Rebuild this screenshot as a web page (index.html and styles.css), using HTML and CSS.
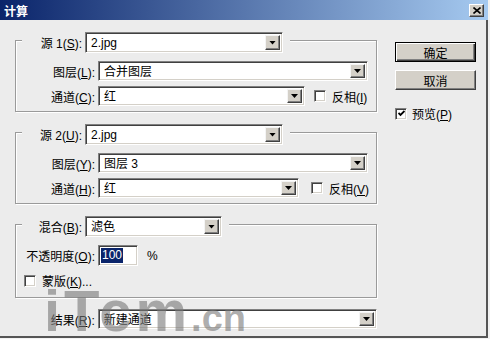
FILE: index.html
```html
<!DOCTYPE html>
<html>
  <head>
    <meta charset="utf-8">
    <title>计算</title>
    <link rel="stylesheet" href="styles.css">
  </head>
  <body>
    <div class="window">
      <div class="titlebar">
        <span class="title">计算</span>
        <span class="close-btn">
          <svg width="8" height="7" viewBox="0 0 8 7"><path d="M0.5 0.5L7.5 6.5M7.5 0.5L0.5 6.5" stroke="#000" stroke-width="1.6" fill="none"/></svg>
        </span>
      </div>

      <div class="main">
        <div class="left">
          <!-- source 1 -->
          <div class="group">
            <div class="group-head">
              <span class="head-label">源 1(<u>S</u>):</span>
              <div class="field tall w-src"><span class="value">2.jpg</span><span class="arrow"></span></div>
            </div>
            <div class="row">
              <span class="row-label">图层(<u>L</u>):</span>
              <div class="field w-layer"><span class="value">合并图层</span><span class="arrow"></span></div>
            </div>
            <div class="row">
              <span class="row-label">通道(<u>C</u>):</span>
              <div class="field w-chan1"><span class="value">红</span><span class="arrow"></span></div>
              <span class="check gap1"></span>
              <span class="check-text">反相(<u>I</u>)</span>
            </div>
          </div>

          <!-- source 2 -->
          <div class="group">
            <div class="group-head">
              <span class="head-label">源 2(<u>U</u>):</span>
              <div class="field tall w-src"><span class="value">2.jpg</span><span class="arrow"></span></div>
            </div>
            <div class="row">
              <span class="row-label">图层(<u>Y</u>):</span>
              <div class="field w-layer"><span class="value">图层 3</span><span class="arrow"></span></div>
            </div>
            <div class="row">
              <span class="row-label">通道(<u>H</u>):</span>
              <div class="field w-chan2"><span class="value">红</span><span class="arrow"></span></div>
              <span class="check gap2"></span>
              <span class="check-text">反相(<u>V</u>)</span>
            </div>
          </div>

          <!-- blending -->
          <div class="group blend">
            <div class="group-head">
              <span class="head-label">混合(<u>B</u>):</span>
              <div class="field tall w-blend"><span class="value">滤色</span><span class="arrow"></span></div>
            </div>
            <div class="row">
              <span class="row-label">不透明度(<u>O</u>):</span>
              <div class="field tall w-opacity"><span class="selected">100</span></div>
              <span class="percent">%</span>
            </div>
            <div class="mask-row">
              <span class="check"></span>
              <span class="check-text">蒙版(<u>K</u>)...</span>
            </div>
          </div>

          <div class="result-row">
            <span class="row-label">结果(<u>R</u>):</span>
            <div class="field w-result"><span class="value">新建通道</span><span class="arrow"></span></div>
          </div>
        </div>

        <div class="side">
          <div class="btn default">确定</div>
          <div class="btn">取消</div>
          <div class="preview">
            <span class="check">
              <svg width="7" height="7" viewBox="0 0 7 7"><path d="M0.5 3L2.5 5L6.5 1" stroke="#000" stroke-width="1.8" fill="none"/></svg>
            </span>
            <span class="check-text">预览(<u>P</u>)</span>
          </div>
        </div>
      </div>

      <div class="watermark"><span class="wm-big">iTcm</span><span class="wm-small">.cn</span></div>
    </div>
  </body>
</html>
```

FILE: styles.css
```css
body {
  margin: 0;
  background: #ececec;
  font-family: "Liberation Sans", "Noto Sans CJK SC", sans-serif;
  font-size: 12px;
  color: #000;
}
.window {
  position: relative;
  width: 490px;
  height: 339px;
  box-sizing: border-box;
  border-right: 2px solid #f2f2f2;
  border-bottom: 1px solid #f2f2f2;
  box-shadow: inset -2px -2px 0 #555;
  overflow: hidden;
}
.titlebar {
  height: 20px;
  display: flex;
  align-items: center;
  justify-content: space-between;
  padding: 0 4px 0 4px;
  background: linear-gradient(to right, #0a246a, #a6caf0);
}
.title {
  color: #fff;
  font-weight: bold;
}
.close-btn {
  width: 15px;
  height: 13px;
  box-sizing: border-box;
  display: flex;
  align-items: center;
  justify-content: center;
  background: #d4d0c8;
  border: 1px solid;
  border-color: #fff #404040 #404040 #fff;
  box-shadow: inset -1px -1px 0 #808080;
}
.main {
  display: flex;
}
.left {
  width: 377px;
  box-sizing: border-box;
  padding: 20px 0 0 15px;
}
.group {
  border: 1px solid #9a9a9a;
  box-shadow: inset 1px 1px 0 #fff, 1px 1px 0 #fff;
  margin-bottom: 20px;
  padding-bottom: 5px;
}
.group.blend {
  margin-bottom: 11px;
  padding-bottom: 8px;
}
.group-head {
  display: flex;
  align-items: center;
  width: fit-content;
  margin: -9px 0 0 6px;
  padding-right: 7px;
  background: #ececec;
}
.head-label {
  width: 60px;
  text-align: right;
  margin-right: 3px;
}
.row {
  display: flex;
  align-items: center;
  margin-top: 8px;
}
.row + .row {
  margin-top: 5px;
}
.row-label {
  width: 79px;
  text-align: right;
  margin-right: 3px;
  white-space: nowrap;
}
.field {
  height: 20px;
  box-sizing: border-box;
  display: flex;
  align-items: stretch;
  padding: 2px;
  background: #fff;
  border: 1px solid;
  border-color: #808080 #fff #fff #808080;
  box-shadow: inset 1px 1px 0 #404040, inset -1px -1px 0 #d4d0c8;
}
.field.tall {
  height: 21px;
}
.field .value {
  flex: 1;
  padding-left: 3px;
  line-height: 16px;
  white-space: nowrap;
}
.arrow {
  width: 15px;
  box-sizing: border-box;
  display: flex;
  align-items: center;
  justify-content: center;
  background: #d4d0c8;
  border: 1px solid;
  border-color: #f4f4f4 #404040 #404040 #f4f4f4;
  box-shadow: inset -1px -1px 0 #808080;
}
.arrow::after {
  content: "";
  width: 7px;
  height: 4px;
  background: #000;
  clip-path: polygon(0 0, 100% 0, 50% 100%);
}
.w-src { width: 198px; }
.w-layer { width: 270px; }
.w-chan1 { width: 207px; }
.w-chan2 { width: 201px; }
.w-blend { width: 137px; }
.w-opacity { width: 40px; padding: 2px 0 0 2px; }
.w-result { width: 280px; }
.selected {
  background: #0a246a;
  color: #fff;
  height: 15px;
  line-height: 15px;
  padding: 0 1px;
}
.percent {
  margin-left: 9px;
}
.check {
  width: 12px;
  height: 12px;
  box-sizing: border-box;
  display: inline-flex;
  align-items: center;
  justify-content: center;
  background: #fff;
  border: 1px solid;
  border-color: #808080 #fff #fff #808080;
  box-shadow: inset 1px 1px 0 #404040, inset -1px -1px 0 #d4d0c8;
}
.check.gap1 { margin-left: 9px; }
.check.gap2 { margin-left: 12px; }
.check-text {
  margin-left: 6px;
  white-space: nowrap;
}
.mask-row {
  display: flex;
  align-items: center;
  margin: 6px 0 0 8px;
}
.result-row {
  display: flex;
  align-items: center;
  padding-left: 1px;
}
.side {
  width: 81px;
  margin-left: 18px;
  padding-top: 22px;
  display: flex;
  flex-direction: column;
}
.btn {
  height: 20px;
  box-sizing: border-box;
  display: flex;
  align-items: center;
  justify-content: center;
  margin-bottom: 8px;
  background: #d4d0c8;
  border: 1px solid;
  border-color: #fff #404040 #404040 #fff;
  box-shadow: inset -1px -1px 0 #808080;
}
.btn.default {
  border-color: #000;
  box-shadow: inset 1px 1px 0 #fff, inset -1px -1px 0 #404040, inset -2px -2px 0 #808080;
}
.preview {
  display: flex;
  align-items: center;
  margin-top: 7px;
}
.preview .check-text {
  margin-left: 5px;
}
.watermark {
  position: absolute;
  left: 44px;
  top: 285px;
  line-height: 52px;
  color: rgba(120, 120, 120, 0.6);
  font-family: "Liberation Sans", sans-serif;
  font-weight: bold;
  white-space: nowrap;
  pointer-events: none;
}
.wm-big {
  font-size: 58px;
  letter-spacing: 4px;
}
.wm-small {
  font-size: 38px;
}
```
